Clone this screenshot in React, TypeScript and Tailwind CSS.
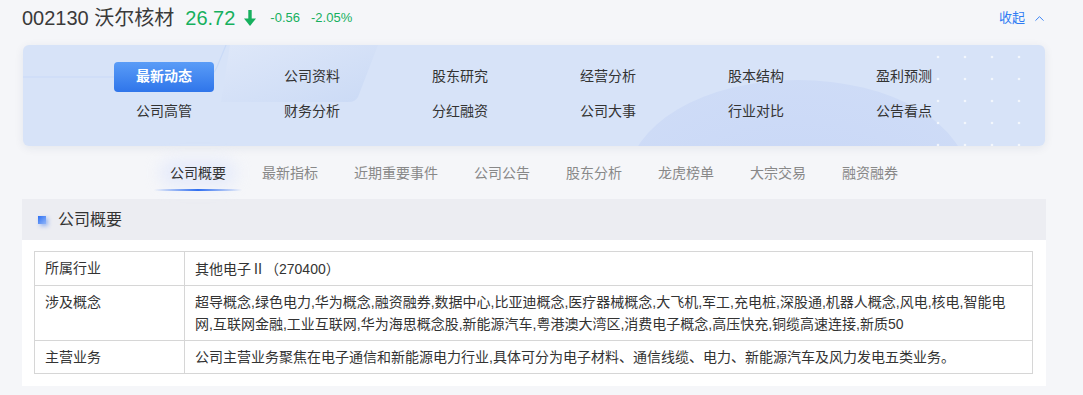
import { ChevronUp } from "lucide-react";

const navRows = [
  ["最新动态", "公司资料", "股东研究", "经营分析", "股本结构", "盈利预测"],
  ["公司高管", "财务分析", "分红融资", "公司大事", "行业对比", "公告看点"],
];

const subTabs = ["公司概要", "最新指标", "近期重要事件", "公司公告", "股东分析", "龙虎榜单", "大宗交易", "融资融券"];

const concepts =
  "超导概念,绿色电力,华为概念,融资融券,数据中心,比亚迪概念,医疗器械概念,大飞机,军工,充电桩,深股通,机器人概念,风电,核电,智能电网,互联网金融,工业互联网,华为海思概念股,新能源汽车,粤港澳大湾区,消费电子概念,高压快充,铜缆高速连接,新质50";

function PanelDecor() {
  const dots = [];
  for (let r = 0; r < 5; r++) {
    for (let c = 0; c < 4; c++) {
      dots.push(<circle key={`${r}-${c}`} cx={915 + c * 27} cy={12 + r * 22} r={1.3} fill="#ffffff" opacity={0.7} />);
    }
  }
  return (
    <svg className="pointer-events-none absolute inset-0" width="1022" height="101" viewBox="0 0 1022 101">
      <defs>
        <linearGradient id="para" x1="0" y1="0" x2="1" y2="1">
          <stop offset="0" stopColor="#dfe8f9" />
          <stop offset="1" stopColor="#c9d9f5" />
        </linearGradient>
        <radialGradient id="blob" cx="0.5" cy="0.6" r="0.6">
          <stop offset="0" stopColor="#c3d3f6" />
          <stop offset="1" stopColor="#cbd9f6" />
        </radialGradient>
      </defs>
      <path d="M207 0 L355 0 L335 52 Q332 57 326 57 L198 57 Z" fill="url(#para)" opacity={0.9} />
      <path d="M0 32 L180 32 Q190 32 194 22 L203 0" stroke="#c9daf7" strokeWidth="1.2" fill="none" />
      <ellipse cx="775" cy="135" rx="170" ry="100" fill="url(#blob)" opacity={0.75} />
      {dots}
    </svg>
  );
}

export default function App() {
  return (
    <div className="min-h-[395px] w-[1083px] bg-[#f5f6f9] font-['Liberation_Sans','Noto_Sans_CJK_SC',sans-serif]">
      <div className="flex h-[36px] items-center justify-between pl-[22px] pr-[36px]">
        <div className="flex items-center">
          <span className="text-[20px] leading-[24px] text-[#3a3a3a]">002130 沃尔核材</span>
          <span className="ml-[11px] text-[20px] leading-[24px] text-[#16b05e]">26.72</span>
          <svg className="ml-[9px]" width="12" height="17" viewBox="0 0 12 17">
            <rect x="4.3" y="0" width="3.4" height="10" fill="#16b05e" />
            <polygon points="0,8.5 12,8.5 6,16" fill="#16b05e" />
          </svg>
          <span className="ml-[14px] text-[13px] leading-[16px] text-[#16b05e]">-0.56</span>
          <span className="ml-[11px] text-[13px] leading-[16px] text-[#16b05e]">-2.05%</span>
        </div>
        <div className="flex items-center text-[13px] leading-[16px] text-[#2f7cf3]">
          收起
          <ChevronUp className="ml-[7px] h-[15px] w-[15px]" strokeWidth={1.5} />
        </div>
      </div>

      <div className="ml-[22px] mr-[37px]">
        <div className="relative ml-px mr-px mt-[9px] h-[101px] overflow-hidden rounded-md bg-[#d7e3f8] shadow-[0_2px_10px_rgba(30,50,90,0.08)]">
          <PanelDecor />
          <div className="relative mx-auto grid w-[888px] grid-cols-6 pt-[14px]">
            {navRows.flat().map((t, i) => (
              <div key={t} className="flex h-[35px] items-center justify-center">
                {i === 0 ? (
                  <div className="flex h-[30px] w-[100px] items-center justify-center rounded bg-gradient-to-b from-[#5a9cf7] to-[#2f75ea] text-[14px] font-bold text-white">
                    {t}
                  </div>
                ) : (
                  <span className="text-[14px] text-[#333]">{t}</span>
                )}
              </div>
            ))}
          </div>
        </div>

        <div className="flex h-[53px] justify-center gap-9">
          {subTabs.map((t, i) => (
            <div key={t} className="relative pt-[17px]">
              {i === 0 && (
                <>
                  <div className="absolute left-[-10px] right-[-10px] top-[14px] h-[26px] rounded-full bg-[#dfe6fb] opacity-70 blur-[8px]" />
                  <div className="absolute left-[-16px] right-[-16px] top-[43px] h-[2px] bg-gradient-to-r from-transparent via-[#2f6ef0] to-transparent" />
                </>
              )}
              <span className={`relative block text-[14px] leading-[20px] ${i === 0 ? "text-[#333]" : "text-[#888]"}`}>{t}</span>
            </div>
          ))}
        </div>

        <div className="bg-white">
          <div className="flex h-[41px] items-center bg-[#ecedf2] pl-[16px]">
            <span className="h-[8px] w-[8px] bg-gradient-to-br from-[#2d6ef2] to-[#8fb4f8] shadow-[2px_2px_4px_rgba(47,110,240,0.45)]" />
            <span className="ml-[12px] text-[16px] leading-[20px] text-[#333]">公司概要</span>
          </div>
          <div className="pb-[12px] pl-[12px] pr-[13px] pt-[11px]">
            <table className="w-full border-collapse text-[14px] leading-[22px] text-[#333]">
              <tbody>
                <tr>
                  <td className="w-[150px] border border-[#d6d6d6] px-[10px] py-[5px] align-top">所属行业</td>
                  <td className="border border-[#d6d6d6] py-[5px] pl-[10px] pr-[18px] align-top">
                    其他电子<span className="font-['Noto_Sans_CJK_SC',sans-serif]">Ⅱ（</span>270400<span className="font-['Noto_Sans_CJK_SC',sans-serif]">）</span>
                  </td>
                </tr>
                <tr>
                  <td className="w-[150px] border border-[#d6d6d6] px-[10px] py-[5px] align-top">涉及概念</td>
                  <td className="border border-[#d6d6d6] py-[5px] pl-[10px] pr-[18px] align-top">{concepts}</td>
                </tr>
                <tr>
                  <td className="w-[150px] border border-[#d6d6d6] px-[10px] py-[5px] align-top">主营业务</td>
                  <td className="border border-[#d6d6d6] py-[5px] pl-[10px] pr-[18px] align-top">
                    公司主营业务聚焦在电子通信和新能源电力行业,具体可分为电子材料、通信线缆、电力、新能源汽车及风力发电五类业务。
                  </td>
                </tr>
              </tbody>
            </table>
          </div>
        </div>
      </div>
    </div>
  );
}
